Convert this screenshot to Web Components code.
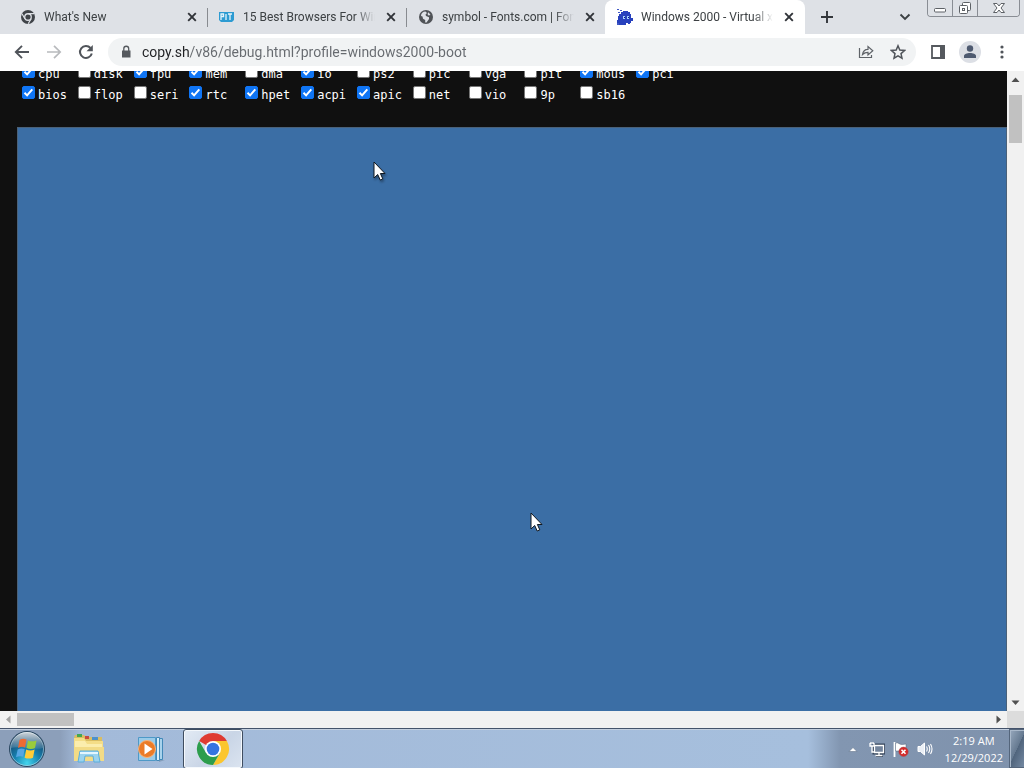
<!DOCTYPE html>
<html lang="en">
<head>
<meta charset="utf-8">
<title>Windows 2000 - Virtual x86</title>
<style>
html, body { height: 100%; margin: 0; }
body { font-family: "Open Sans", "Noto Sans", sans-serif; font-size: 12px; color: #3c4043; overflow: hidden; }
</style>
</head>
<body>
<desktop-screen></desktop-screen>
<script>
const define = (name, html, setup) => {
  const template = document.createElement('template');
  template.innerHTML = html;
  customElements.define(name, class extends HTMLElement {
    constructor() {
      super();
      this.attachShadow({ mode: 'open' }).append(template.content.cloneNode(true));
    }
    connectedCallback() { if (setup) setup(this, this.shadowRoot); }
  });
};

define('browser-tab', `
<style>
  :host { display: flex; box-sizing: border-box; flex: 0 1 199px; min-width: 0; height: 34px; align-items: center; gap: 8px; padding: 0 7px 0 12px; position: relative; font-family: Roboto, "Open Sans", sans-serif; }
  :host([divider])::after { content: ""; position: absolute; right: -1px; top: 8px; width: 1px; height: 19px; background: #888b90; }
  :host([active]) { background: #fff; border-radius: 8px 8px 0 0; flex-basis: 200px; padding-right: 8px; }
  ::slotted(svg) { width: 16px; height: 16px; flex: none; display: block; }
  .title { flex: 1; min-width: 0; overflow: hidden; white-space: nowrap; line-height: 18px; -webkit-mask-image: linear-gradient(to right, #000 calc(100% - 20px), transparent); mask-image: linear-gradient(to right, #000 calc(100% - 20px), transparent); }
  button { border: 0; padding: 0; background: none; width: 16px; height: 16px; flex: none; }
  button svg { display: block; }
</style>
<slot name="icon"></slot>
<span class="title"><slot></slot></span>
<button aria-label="Close tab"><svg width="16" height="16" viewBox="0 0 16 16"><path d="M4.2 4.2l7.6 7.6M11.8 4.2l-7.6 7.6" stroke="#303338" stroke-width="1.9"/></svg></button>
`);

define('tool-button', `
<style>
  :host { display: block; flex: none; }
  button { display: grid; place-items: center; width: 28px; height: 28px; border: 0; padding: 0; background: none; border-radius: 14px; }
</style>
<button><slot></slot></button>
`, (host, root) => root.querySelector('button').setAttribute('aria-label', host.getAttribute('label')));

define('window-controls', `
<style>
  :host { display: flex; align-self: flex-start; box-sizing: border-box; height: 17px; border: 1px solid #898d94; border-top: 0; border-radius: 0 0 4px 4px; margin-right: 4px; overflow: hidden; }
  button { border: 0; border-right: 1px solid #898d94; padding: 0; background: #dee1e6; width: 25px; height: 16px; }
  button:last-child { border-right: 0; width: 41px; }
  svg { display: block; margin: 0 auto; }
</style>
<button aria-label="Minimize"><svg width="14" height="16" viewBox="0 0 14 16"><rect x="1.5" y="8.500" width="11" height="3.500" rx="1" fill="#fff" stroke="#5d6166"/></svg></button>
<button aria-label="Restore"><svg width="14" height="16" viewBox="0 0 14 16"><g fill="#fff" stroke="#5d6166"><rect x="4.500" y="2.500" width="8" height="8" rx="1"/><rect x="1.500" y="5.500" width="8" height="8" rx="1"/><rect x="4.500" y="8.500" width="2" height="2"/></g></svg></button>
<button aria-label="Close"><svg width="14" height="16" viewBox="0 0 14 16"><path d="M1.500 3.500h3.500l2 2.500 2-2.500h3.500l-3.500 4.500 3.500 4.500H9l-2-2.500-2 2.500H1.500L5 8z" fill="#fff" stroke="#5d6166"/></svg></button>
`);

define('tab-strip', `
<style>
  :host { display: flex; flex: none; height: 34px; background: #dee1e6; padding-left: 8px; align-items: center; }
  .space { flex: 1; }
  .add { margin-left: 8px; }
  .list { margin-right: 8px; }
</style>
<browser-tab divider>
  <svg slot="icon" viewBox="0 0 16 16"><circle cx="8" cy="8" r="7" fill="#3f4348"/><circle cx="8" cy="8" r="3.900" fill="#dee1e6"/><circle cx="8" cy="8" r="2.600" fill="#3f4348"/><path d="M8 4.600h6M4.900 9.800L2 4.800M11.100 9.800l-2.900 5" stroke="#dee1e6" stroke-width="1.200"/></svg>What's New</browser-tab>
<browser-tab divider>
  <svg slot="icon" viewBox="0 0 16 16"><path d="M0 3h15v8l-2 2H2l-2-2z" fill="#2d9bd2"/><path d="M2 11V5h2.500v2.500H2M7 5v6M9 5h4M11 5v6" fill="none" stroke="#e4f3fb" stroke-width="1.300"/></svg>15 Best Browsers For Windows</browser-tab>
<browser-tab>
  <svg slot="icon" viewBox="0 0 16 16"><circle cx="8" cy="8" r="7" fill="#505357"/><path d="M3 7c0-3 2-4.500 4.500-4.500L9 4 7.500 5.500 8 7l3 1.200V10l-2.500 3.400H7.200V11L5 9.800 4.500 7.600z" fill="#dee1e6"/><path d="M10.500 3.300l2 2.700-2 .5-1-1.500z" fill="#dee1e6"/></svg>symbol - Fonts.com | Fonts.com</browser-tab>
<browser-tab active>
  <svg slot="icon" viewBox="0 0 16 16"><path d="M4 3h2V2h5v1h2v2h1v4h2v3h-2v2h-1v1h-2v-1H9v2H2v-1H0v-4h1V7h1V5h2z" fill="#2841bd"/><path d="M0 0h2v1H0zM3 1h2v1H3zM1 3h2v1H1zM0 14h2v2H0z" fill="#4058c4"/><path d="M6 7h2v3H6zM10 7h2v3h-2z" fill="#a8d0ff"/><path d="M7 8h1v1H7zM11 8h1v1h-1z" fill="#10206e"/></svg>Windows 2000 - Virtual x86</browser-tab>
<tool-button class="add" label="New tab"><svg width="16" height="16" viewBox="0 0 16 16"><path d="M8 2v12M2 8h12" stroke="#33363b" stroke-width="1.900"/></svg></tool-button>
<span class="space"></span>
<tool-button class="list" label="Search tabs"><svg width="16" height="16" viewBox="0 0 16 16"><path d="M3.500 5.500L8 10l4.500-4.500" fill="none" stroke="#3c4043" stroke-width="1.900"/></svg></tool-button>
<window-controls></window-controls>
`);

define('address-bar', `
<style>
  :host { display: flex; flex: 1; min-width: 0; align-items: center; gap: 4px; height: 28px; background: #f1f3f4; border-radius: 14px; padding: 0 4px 0 10px; box-sizing: border-box; margin: 0 4px; }
  svg { display: block; flex: none; }
  input { flex: 1; min-width: 0; border: 0; outline: 0; padding: 0; margin-left: 4px; height: 20px; font: 14px/20px Roboto, "Open Sans", sans-serif; color: #5f6368; background: linear-gradient(to right, #202124 48px, #666a6f 48px); -webkit-background-clip: text; background-clip: text; -webkit-text-fill-color: transparent; }
</style>
<svg width="16" height="16" viewBox="0 0 16 16"><path d="M4 6.500h8.500v7H4z" fill="#55595e"/><path d="M5.800 7V4.700a2.400 2.400 0 0 1 4.900 0V7" fill="none" stroke="#55595e" stroke-width="1.300"/></svg>
<input aria-label="Address" value="copy.sh/v86/debug.html?profile=windows2000-boot" spellcheck="false">
<tool-button label="Share"><svg width="16" height="16" viewBox="0 0 16 16" fill="none" stroke="#5f6368" stroke-width="1.200"><path d="M1.500 4v9.500h12V11"/><path d="M4.500 10.500C5 7 7 5.300 10 5.300V2.500L14.800 6.800 10 11V8.300c-2.500 0-4 .7-5.500 2.200z"/></svg></tool-button>
<tool-button label="Bookmark"><svg width="16" height="16" viewBox="0 0 16 16"><path d="M8 1.800l1.800 4.300 4.700.4-3.500 3.100 1 4.600L8 11.800l-4 2.400 1-4.600L1.500 6.500l4.700-.4z" fill="none" stroke="#50545a" stroke-width="1.500"/></svg></tool-button>
`);

define('browser-toolbar', `
<style>
  :host { display: flex; flex: none; align-items: center; gap: 4px; height: 37px; background: #fff; padding: 0 8px 1px; box-sizing: border-box; }
</style>
<tool-button label="Back"><svg width="16" height="16" viewBox="0 0 16 16"><path d="M15 8H2M8 1.800L1.800 8 8 14.200" fill="none" stroke="#50545a" stroke-width="1.900"/></svg></tool-button>
<tool-button label="Forward"><svg width="16" height="16" viewBox="0 0 16 16"><path d="M1 8h13M8 1.800L14.200 8 8 14.200" fill="none" stroke="#b8babd" stroke-width="1.700"/></svg></tool-button>
<tool-button label="Reload"><svg width="16" height="16" viewBox="0 0 16 16"><path d="M13.800 9.500A6 6 0 1 1 12.500 4" fill="none" stroke="#50545a" stroke-width="2"/><path d="M14.800 1v6.300H8.500z" fill="#50545a"/></svg></tool-button>
<address-bar></address-bar>
<tool-button label="Side panel"><svg width="16" height="16" viewBox="0 0 16 16"><path d="M2 2h12v12H2z" fill="#fff" stroke="#55595e" stroke-width="1.800"/><path d="M10 1h5v14h-5z" fill="#55595e"/></svg></tool-button>
<tool-button label="Profile"><svg width="22" height="22" viewBox="0 0 22 22"><circle cx="11" cy="11" r="11" fill="#dcdfe5"/><circle cx="11" cy="7.500" r="3.200" fill="#4e5a70"/><path d="M5 17v-2c0-2 3-3 6-3s6 1 6 3v2z" fill="#4e5a70"/></svg></tool-button>
<tool-button label="Menu"><svg width="16" height="16" viewBox="0 0 16 16" fill="#50545a"><circle cx="8" cy="3" r="1.600"/><circle cx="8" cy="8" r="1.600"/><circle cx="8" cy="13" r="1.600"/></svg></tool-button>
`);

define('device-check', `
<style>
  :host { display: block; height: 21px; }
  label { display: flex; gap: 3px; white-space: nowrap; }
  input { appearance: none; box-sizing: border-box; flex: none; width: 13px; height: 13px; margin: 0; border: 1px solid #767676; border-radius: 2px; background: #fff; display: block; }
  input:checked { border-color: #0f75f5; background: #0f75f5 url('data:image/svg+xml,<svg xmlns="http://www.w3.org/2000/svg" viewBox="0 0 11 11"><path d="M1.500 5.800l2.600 2.600L9.300 2.300" fill="none" stroke="white" stroke-width="2"/></svg>'); }
  span { line-height: 19px; }
</style>
<label><input type="checkbox"><span><slot></slot></span></label>
`, (host, root) => { root.querySelector('input').checked = host.hasAttribute('on'); });

define('log-filters', `
<style>
  :host { display: flex; flex: none; flex-direction: column; justify-content: flex-end; box-sizing: border-box; height: 56px; padding: 0 22px 20px; overflow: hidden; background: #101010; color: #fff; font: 12px "DejaVu Sans Mono", "Liberation Mono", monospace; }
  div { display: grid; grid-template-columns: repeat(12, 1fr); max-width: 670px; }
</style>
<div></div>
`, (host, root) => {
  const rows = [
    '*cpu disk *fpu *mem dma *io ps2 pic vga pit *mous *pci',
    '*bios flop seri *rtc *hpet *acpi *apic net vio 9p sb16'
  ];
  const grid = root.querySelector('div');
  for (const name of rows.join(' ').split(' ')) {
    const item = document.createElement('device-check');
    item.toggleAttribute('on', name[0] === '*');
    item.textContent = name.replace('*', '');
    grid.append(item);
  }
});

define('mouse-pointer', `
<style>:host { display: block; position: absolute; } svg { display: block; filter: drop-shadow(1px 2px 1px #0005); } :host([flat]) svg { filter: none; }</style>
<svg width="14" height="22" viewBox="0 0 14 22"><path d="M1 1v16l3.700-3.500L7.200 19l2.600-1.100-2.400-5.400H12z" fill="#fff" stroke="#111820"/></svg>
`);

define('emulator-page', `
<style>
  :host { display: flex; flex: 1; flex-direction: column; min-width: 0; background: #101010; }
  .screen { flex: 1; margin-left: 17px; background: #3b6ea5; border: solid #4a6179; border-width: 1px 1px 0 1px; position: relative; }
  .host { left: 355px; top: 33px; }
  .guest { left: 512px; top: 384px; }
</style>
<log-filters></log-filters>
<div class="screen"><mouse-pointer class="host"></mouse-pointer><mouse-pointer class="guest" flat></mouse-pointer></div>
`);

define('scroll-bar', `
<style>
  :host { display: flex; flex: 1; background: #f1f1f1; min-width: 0; }
  :host([vertical]) { flex: 0 0 17px; flex-direction: column; }
  svg { width: 17px; height: 17px; flex: none; display: block; }
  .track { flex: 1; display: flex; padding: 2px 0; }
  .thumb { background: #c1c1c1; width: 57px; }
  :host([vertical]) .track { flex-direction: column; padding: 7px 2px 0; }
  :host([vertical]) .thumb { width: auto; height: 48px; }
  .up, .down { display: none; }
  :host([vertical]) .up, :host([vertical]) .down { display: block; }
  :host([vertical]) .left, :host([vertical]) .right { display: none; }
</style>
<svg class="up" viewBox="0 0 17 17"><path d="M4.500 11l4-4.500 4 4.500z" fill="#505050"/></svg>
<svg class="left" viewBox="0 0 17 17"><path d="M10.500 4.500v8l-4.500-4z" fill="#a3a3a3"/></svg>
<div class="track"><div class="thumb"></div></div>
<svg class="down" viewBox="0 0 17 17"><path d="M4.500 6.500h8l-4 4.500z" fill="#505050"/></svg>
<svg class="right" viewBox="0 0 17 17"><path d="M6.500 4.500v8l4.500-4z" fill="#505050"/></svg>
`);

define('task-button', `
<style>
  :host { display: block; flex: none; }
  button { display: grid; place-items: center; box-sizing: border-box; width: 60px; height: 40px; padding: 0; border: 1px solid transparent; border-radius: 3px; background: none; }
  :host([active]) button { border-color: #3f4d60; background: linear-gradient(135deg, #e3ebf5, #c9d5e6 55%, #dbe4f0); box-shadow: inset 0 0 0 1px #f4f8fc; }
</style>
<button><slot></slot></button>
`, (host, root) => root.querySelector('button').setAttribute('aria-label', host.getAttribute('label')));

define('task-bar', `
<style>
  :host { display: flex; flex: none; box-sizing: border-box; height: 40px; align-items: center; gap: 2px; border-top: 1px solid #43526a; box-shadow: inset 0 1px #c3cfdf; background: linear-gradient(to right, #8c9fba 0, #8c9fba 60px, #a3bad9 80px, #a6bfdd calc(100% - 216px), #8296b1 calc(100% - 184px), #7f92ac 100%); }
  .start { width: 54px; height: 39px; padding: 0; border: 0; background: none; margin-right: 3px; }
  svg { display: block; }
  .start svg { margin: 0 auto; }
  .space { flex: 1; }
  .tray { display: flex; align-items: center; gap: 8px; margin-right: 10px; }
  .tray button { border: 0; padding: 0; background: none; }
  time { display: block; text-align: center; color: #fff; font-size: 11px; line-height: 17px; margin-right: 4px; }
  .peek { width: 15px; height: 39px; padding: 0; border: 1px solid #54657b; border-right: 0; background: linear-gradient(115deg, #97a8bd, #657990 50%, #50647c 51%, #7489a2); box-shadow: inset 1px 1px #a9b8ca; }
</style>
<button class="start" aria-label="Start"><svg width="38" height="38" viewBox="0 0 38 38">
  <defs><radialGradient id="orb" cx=".5" cy=".9" r=".85"><stop offset="0" stop-color="#43d5ed"/><stop offset=".45" stop-color="#167fae"/><stop offset=".8" stop-color="#175078"/><stop offset="1" stop-color="#33536e"/></radialGradient><linearGradient id="gloss" x2="0" y2="1"><stop stop-color="#fff" stop-opacity=".75"/><stop offset="1" stop-color="#fff" stop-opacity=".1"/></linearGradient></defs>
  <circle cx="19" cy="19" r="17.500" fill="url(#orb)" stroke="#2c4760"/><circle cx="19" cy="19" r="16.500" fill="none" stroke="#b9d8e8" stroke-opacity=".6"/><path d="M3 18a16 16 0 0 1 32 0c-8 3-22-3-32 0z" fill="url(#gloss)"/>
  <path d="M11.500 10c2.500-1.500 4.500-1.500 7-.4L17 17.500c-2-1-4.500-.8-7 .5z" fill="#ee6a32"/><path d="M20 10.400c2.500 1.200 4.500 1.200 8.500 0L27 18c-2.500 1.200-6 1.200-8.500 0z" fill="#9acb3b"/><path d="M9.700 19.500c2.300-1.300 4.600-1.500 7-.4l-1.500 7.700c-2.500-1-4.700-.8-7.200.5z" fill="#55a6e4"/><path d="M18.200 19.600c2.500 1.200 5.700 1.200 8.400 0L25 27.700c-2.500 1.200-5.700 1.200-8.400 0z" fill="#ffcc38"/></svg></button>
<task-button label="Windows Explorer"><svg width="34" height="32" viewBox="0 0 34 32">
  <path d="M2 5l1-3h9l2 2h16v20H2z" fill="#d9bd62"/><path d="M5 1h5v3H5z" fill="#45a650"/><path d="M13 3h4v3h-4z" fill="#c84b3e"/><path d="M20 4h6v3h-6z" fill="#4d91cb"/><path d="M2 5h10l2 3h17v20H2z" fill="#f4dd87"/><path d="M3 8h10l2 3h15v16H3z" fill="#fbedad"/><path d="M2 14h30v14H2z" fill="#f2db86"/><path d="M6 29l2-11h18l2 11h-6l-1-6h-8l-1 6z" fill="#9bd3ee" stroke="#5aaedc"/><path d="M8 19h18v2H8z" fill="#e3f6ff"/></svg></task-button>
<task-button label="Windows Media Player"><svg width="30" height="28" viewBox="0 0 30 28">
  <path d="M23 25h6l-6 2z" fill="#63809c" opacity=".5"/><path d="M22.500 3.500h4v21h-4z" fill="#a9d3ec" stroke="#4289b8"/><path d="M20.500 2.500h3v23h-3z" fill="#d9effa" stroke="#4289b8"/><path d="M2.500 2.500h17v23h-17z" fill="#9acbe8" stroke="#4e99c7"/><circle cx="11" cy="14" r="8.500" fill="#eb7b27" stroke="#f7b37a"/><path d="M8.500 8.500l8 5.500-8 5.500z" fill="#fff"/></svg></task-button>
<task-button label="Google Chrome" active><svg width="34" height="34" viewBox="0 0 34 34">
  <path d="M17 17L3.140 9A16 16 0 0 1 30.860 9z" fill="#df3b32"/><path d="M30.860 9A16 16 0 0 1 17 33l6.900-12L24 9z" fill="#fbc62f"/><path d="M3.140 9A16 16 0 0 0 17 33l6.900-12L17 17l-6.900 4z" fill="#2d9d4c"/><path d="M17 9h13.860L23.900 21z" fill="#fbc62f"/><circle cx="17" cy="17" r="8" fill="#fff"/><circle cx="17" cy="17" r="6.300" fill="#3674e0"/></svg></task-button>
<span class="space"></span>
<div class="tray">
  <button aria-label="Show hidden icons"><svg width="16" height="16" viewBox="0 0 16 16"><path d="M4 10.500h8L8 6.500z" fill="#fff" stroke="#65768d" stroke-width=".6"/></svg></button>
  <button aria-label="Network"><svg width="16" height="16" viewBox="0 0 16 16"><path d="M5 4h10v8H5zM7 15h7M10 12v3" fill="none" stroke="#35445a" stroke-width="3"/><path d="M5.500 4.500h9v7h-9z" fill="#73849c" stroke="#fff" stroke-width="1.300"/><path d="M6.500 14.500h7M10 12v2M1 2v3h4V2M3 5v6h2M2 1v2M4 1v2" fill="none" stroke="#fff" stroke-width="1.300"/></svg></button>
  <button aria-label="Action Center"><svg width="16" height="16" viewBox="0 0 16 16"><path d="M1.500 1v15" stroke="#fff" stroke-width="1.800"/><path d="M2.500 2c3-1 4 2 7 1.500L13 3v7H2.500z" fill="#fff" stroke="#526279" stroke-width=".5"/><circle cx="10.500" cy="10.800" r="4.700" fill="#d42b2b" stroke="#a8484c" stroke-width=".5"/><path d="M8.500 8.800l4 4M12.500 8.800l-4 4" stroke="#fff" stroke-width="1.600"/></svg></button>
  <button aria-label="Volume"><svg width="16" height="16" viewBox="0 0 16 16"><path d="M1 5.500h2.500L7.500 2v12l-4-3.500H1z" fill="#e9eef5" stroke="#fff"/><path d="M9.500 5.500q1.500 2.500 0 5M11.500 4q2.500 4 0 8M13.500 3q3 5 0 10" fill="none" stroke="#fff" stroke-width="1.100"/></svg></button>
</div>
<time datetime="2022-12-29T02:19">2:19 AM<br>12/29/2022</time>
<button class="peek" aria-label="Show desktop"></button>
`);

define('desktop-screen', `
<style>
  :host { display: flex; flex-direction: column; height: 100vh; }
  main { display: flex; flex: 1; min-height: 0; }
  .bottom { display: flex; flex: none; height: 17px; }
  .corner { width: 17px; background: #dcdcdc; }
</style>
<tab-strip></tab-strip>
<browser-toolbar></browser-toolbar>
<main><emulator-page></emulator-page><scroll-bar vertical></scroll-bar></main>
<div class="bottom"><scroll-bar></scroll-bar><div class="corner"></div></div>
<task-bar></task-bar>
`);
</script>
</body>
</html>
